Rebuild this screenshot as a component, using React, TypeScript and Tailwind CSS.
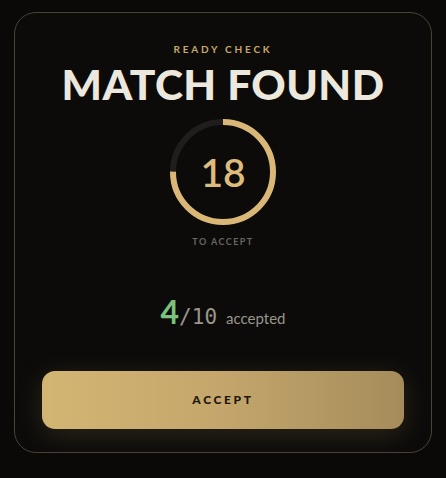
export default function App() {
  const total = 24;
  const left = 18;
  const r = 50;
  const c = 2 * Math.PI * r;
  const dash = (left / total) * c;

  return (
    <div className="min-h-[478px] w-[446px] bg-[#0a0908] pt-3 font-['Lato',sans-serif]">
      <div className="mx-[14px] flex h-[441px] flex-col items-center rounded-[22px] border border-[#4a4232] bg-[#0c0b0a] pt-[29px]">
        <div className="text-[10px] font-bold tracking-[0.28em] text-[#c9a86a]">READY CHECK</div>
        <h1 className="mt-[4px] text-[42.5px] leading-[46px] font-black tracking-[0.01em] text-[#ece8de]">
          MATCH FOUND
        </h1>

        <div className="relative mt-[10px] h-[110px] w-[110px]">
          <svg viewBox="0 0 110 110" className="h-full w-full -rotate-90">
            <circle cx="55" cy="55" r={r} fill="none" stroke="#1f1e1c" strokeWidth="6" />
            <circle
              cx="55"
              cy="55"
              r={r}
              fill="none"
              stroke="#d9b877"
              strokeWidth="6"
              strokeDasharray={`${dash} ${c}`}
            />
          </svg>
          <div className="absolute inset-0 flex items-center justify-center text-[39px] font-semibold text-[#dcbb7c]">
            {left}
          </div>
        </div>
        <div className="mt-[8px] text-[9px] font-bold tracking-[0.16em] text-[#6a655d]">TO ACCEPT</div>

        <div className="mt-[39px] flex items-baseline">
          <span className="text-[32px] font-bold text-[#7ac27d]">4</span>
          <span className="font-['DejaVu_Sans_Mono',monospace] text-[21px] text-[#9a958b]">/10</span>
          <span className="ml-[9px] text-[15px] text-[#9a958b]">accepted</span>
        </div>

        <button className="mt-[35px] flex h-[58px] w-[362px] items-center justify-center rounded-[13px] bg-gradient-to-r from-[#d3b573] via-[#c4a66c] to-[#a58c5a] text-[12px] font-black tracking-[0.22em] text-[#1e1609] shadow-[0_6px_28px_rgba(200,165,95,0.18)]">
          ACCEPT
        </button>
      </div>
    </div>
  );
}
